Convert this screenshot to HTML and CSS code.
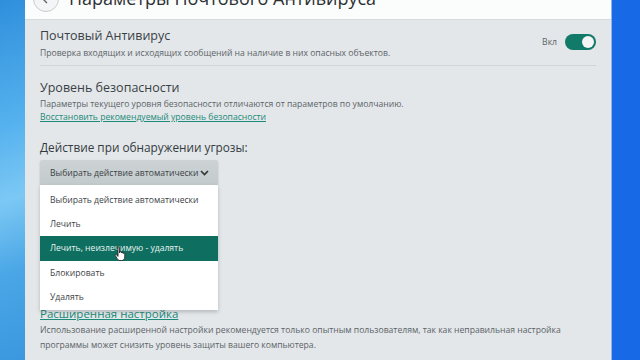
FILE: index.html
```html
<!DOCTYPE html>
<html lang="ru">
<head>
    <meta charset="UTF-8">
    <title>Параметры Почтового Антивируса</title>
    <link rel="stylesheet" href="styles.css">
</head>
<body>
    <div class="desktop">
        <div class="desk-left"></div>

        <div class="window">
            <header class="win-header">
                <div class="back-btn">
                    <svg width="10" height="10" viewBox="0 0 10 10"><path d="M6 1 L3 4 L6 7" fill="none" stroke="#666" stroke-width="1.4"/></svg>
                </div>
                <h1 class="win-title">Параметры Почтового Антивируса</h1>
            </header>

            <div class="content">
                <section class="row row-main">
                    <div class="row-text">
                        <div class="row-title">Почтовый Антивирус</div>
                        <div class="row-desc">Проверка входящих и исходящих сообщений на наличие в них опасных объектов.</div>
                    </div>
                    <div class="switch-wrap">
                        <span class="switch-label">Вкл</span>
                        <span class="switch"><span class="knob"></span></span>
                    </div>
                </section>

                <section class="row level">
                    <div class="row-title">Уровень безопасности</div>
                    <div class="row-desc">Параметры текущего уровня безопасности отличаются от параметров по умолчанию.</div>
                    <a class="small-link" href="#">Восстановить рекомендуемый уровень безопасности</a>
                </section>

                <section class="action">
                    <div class="action-title">Действие при обнаружении угрозы:</div>
                    <div class="select-wrap">
                        <div class="select">
                            <span>Выбирать действие автоматически</span>
                            <svg width="9" height="6" viewBox="0 0 9 6"><path d="M1 1 L4.5 4.5 L8 1" fill="none" stroke="#333" stroke-width="1.6"/></svg>
                        </div>
                        <ul class="dropdown">
                            <li>Выбирать действие автоматически</li>
                            <li>Лечить</li>
                            <li class="active">Лечить, неизлечимую - удалять
                                <svg class="cursor" width="14" height="16" viewBox="0 0 14 16"><path d="M4 1.5 C4 0.7 5.6 0.7 5.6 1.5 L5.6 7 L6 5.8 C6 5 7.6 5 7.6 5.8 L7.6 7 C7.6 6.2 9.2 6.2 9.2 7 L9.2 7.6 C9.2 6.8 10.8 6.8 10.8 7.6 L10.8 11 C10.8 13 9.6 14.5 7.6 14.5 L6 14.5 C4.6 14.5 3.8 13.6 3 12.4 L1.2 9.4 C0.8 8.6 2 8 2.6 8.8 L4 10.4 Z" fill="#fff" stroke="#222" stroke-width="0.9"/></svg>
                            </li>
                            <li>Блокировать</li>
                            <li>Удалять</li>
                        </ul>
                    </div>
                </section>

                <section class="advanced">
                    <a class="big-link" href="#">Расширенная настройка</a>
                    <p class="row-desc">Использование расширенной настройки рекомендуется только опытным пользователям, так как неправильная настройка программы может снизить уровень защиты вашего компьютера.</p>
                </section>
            </div>
        </div>

        <div class="desk-right"></div>
    </div>
</body>
</html>
```

FILE: styles.css
```css
:root {
    --teal: #117a69;
    --teal-dark: #0e6f60;
    --panel: #e3e7ea;
    --line: #cfd5d8;
    --text: #333a3d;
    --muted: #5c6467;
}

* {
    margin: 0;
    padding: 0;
    box-sizing: border-box;
}

body {
    width: 640px;
    height: 360px;
    overflow: hidden;
    font-family: 'Open Sans', 'Noto Sans', sans-serif;
    color: var(--text);
}

.desktop {
    display: flex;
    height: 360px;
}

.desk-left {
    width: 25px;
    flex-shrink: 0;
    background: linear-gradient(160deg, #2f8fdc 0%, #56b2ee 35%, #7cc8f4 55%, #4aa6e6 75%, #3b98df 100%);
}

.desk-right {
    flex: 1;
    background: #1769e6;
    border-left: 1px solid #8fb8ea;
}

.window {
    width: 586px;
    flex-shrink: 0;
    background: var(--panel);
    display: flex;
    flex-direction: column;
    overflow: hidden;
}

.win-header {
    height: 20px;
    flex-shrink: 0;
    background: #fbfcfc;
    border-bottom: 1px solid #d6dbde;
    display: flex;
    align-items: flex-end;
    overflow: hidden;
    padding-left: 8px;
}

.back-btn {
    width: 26px;
    height: 26px;
    border: 1px solid #c7cdd0;
    border-radius: 50%;
    background: #f3f5f6;
    margin-bottom: 7px;
    display: flex;
    justify-content: center;
    align-items: flex-end;
    padding-bottom: 5px;
    flex-shrink: 0;
}

.win-title {
    font-size: 18px;
    font-weight: 400;
    color: #2b3033;
    margin-left: 10px;
    margin-bottom: 11px;
    line-height: 20px;
    white-space: nowrap;
}

.content {
    padding: 0 15px;
    position: relative;
    flex: 1;
    min-height: 0;
}

.row {
    border-bottom: 1px solid var(--line);
}

.row-main {
    display: flex;
    justify-content: space-between;
    align-items: center;
    height: 46px;
    padding-top: 1px;
}

.row-title {
    font-size: 12.5px;
    line-height: 17px;
    color: #3a4145;
}

.row-desc {
    font-size: 8.6px;
    line-height: 14px;
    color: var(--muted);
}

.switch-wrap {
    display: flex;
    align-items: center;
    gap: 8px;
    margin-top: -2px;
}

.switch-label {
    font-size: 8.6px;
    color: var(--muted);
}

.switch {
    width: 31px;
    height: 16px;
    border-radius: 8px;
    background: var(--teal);
    display: flex;
    justify-content: flex-end;
    align-items: center;
    padding: 2px;
}

.knob {
    width: 12px;
    height: 12px;
    border-radius: 50%;
    background: #f4f6f6;
}

.level {
    border-bottom: none;
    padding-top: 13px;
}

.row-main .row-desc {
    margin-top: 2px;
}

.level .row-desc {
    margin-top: 1px;
}

.small-link {
    display: block;
    font-size: 8.6px;
    line-height: 13px;
    color: #1b8a78;
    text-decoration: underline;
}

.action {
    padding-top: 14px;
}

.action-title {
    font-size: 11.8px;
    line-height: 18px;
    color: #343b3e;
    margin-bottom: 4px;
}

.select-wrap {
    position: relative;
    width: 178px;
}

.select {
    height: 25px;
    background: linear-gradient(#cdd3d5, #c3cacc);
    border-radius: 2px 2px 0 0;
    box-shadow: 0 1px 2px rgba(0, 0, 0, 0.2);
    display: flex;
    align-items: center;
    justify-content: space-between;
    padding: 0 9px 0 10px;
    font-size: 8.6px;
    color: #3b4245;
}

.dropdown {
    position: absolute;
    top: 25px;
    left: 0;
    width: 178px;
    background: #fff;
    list-style: none;
    box-shadow: 0 2px 4px rgba(0, 0, 0, 0.2);
    z-index: 5;
    padding: 3px 0 1px;
}

.dropdown li {
    height: 24.2px;
    line-height: 24.2px;
    padding-left: 10px;
    font-size: 8.6px;
    color: #3d4447;
    position: relative;
}

.dropdown li.active {
    background: var(--teal-dark);
    color: #e8f3f1;
}

.cursor {
    position: absolute;
    left: 74px;
    top: 10px;
}

.advanced {
    padding-top: 121px;
}

.big-link {
    display: block;
    font-size: 11.5px;
    line-height: 16px;
    color: #1b8a78;
    text-decoration: underline;
    margin-bottom: 1px;
}

.advanced .row-desc {
    line-height: 15px;
}
```
